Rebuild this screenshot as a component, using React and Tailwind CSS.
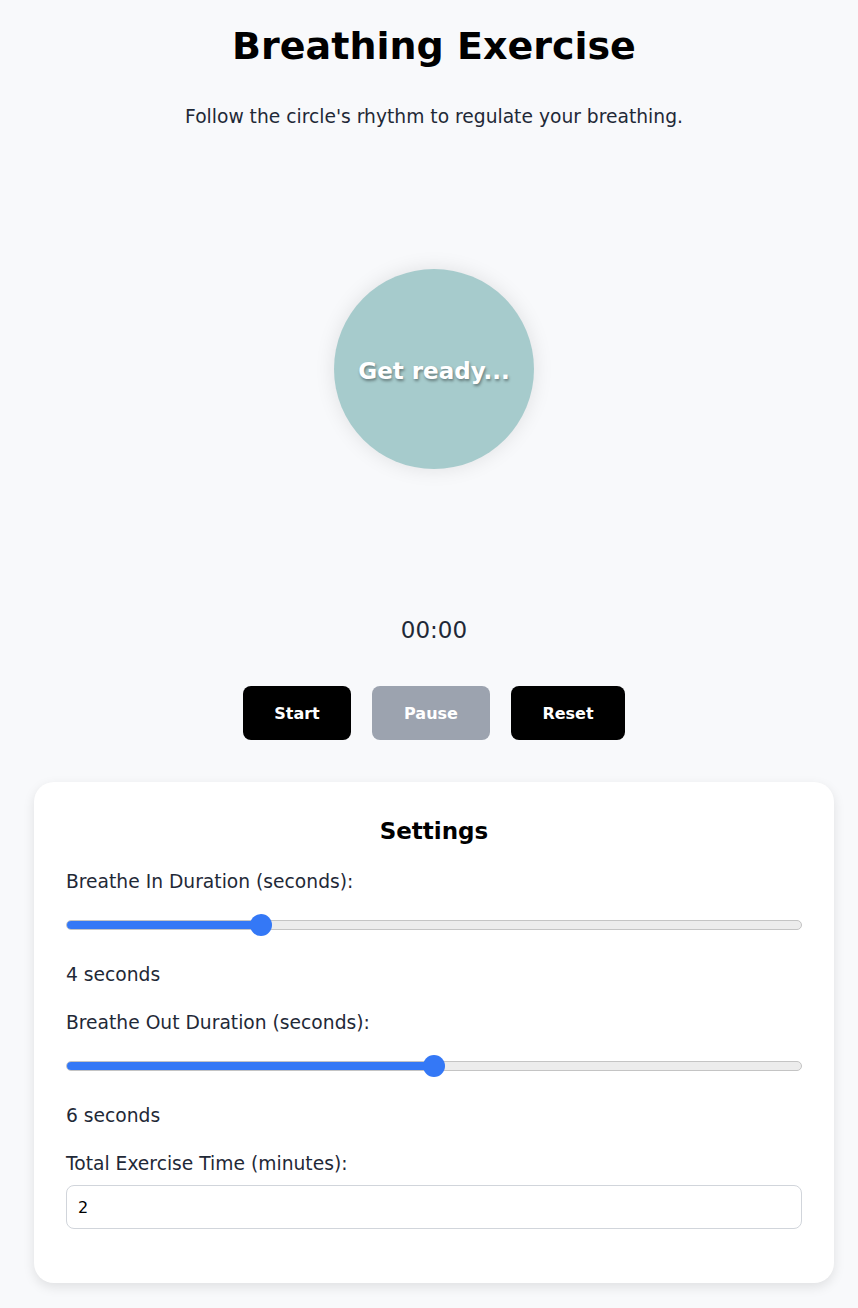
import React, { useState } from "react";

const Slider = ({ percent }) => (
  <div className="relative h-[22px] flex items-center">
    <div className="w-full h-[10px] rounded-full bg-[#ececec] border border-[#c4c4c4] overflow-hidden">
      <div className="h-full bg-[#3478f6]" style={{ width: `${percent}%` }} />
    </div>
    <div
      className="absolute top-0 w-[22px] h-[22px] -ml-[11px] rounded-full bg-[#3478f6]"
      style={{ left: `${percent}%` }}
    />
  </div>
);

export default function App() {
  const [minutes, setMinutes] = useState("2");

  return (
    <div className="min-h-screen bg-[#f8f9fb] pl-[10px] flex flex-col items-center font-['DejaVu_Sans',sans-serif] text-[#1f2937]">
      <h1 className="mt-[22px] text-[38px] leading-[48px] font-bold text-black">
        Breathing Exercise
      </h1>
      <p className="mt-[36px] text-[18.7px] leading-[22px]">
        Follow the circle's rhythm to regulate your breathing.
      </p>

      <div className="h-[400px] mt-[41px] flex items-center justify-center">
        <div className="w-[200px] h-[200px] pt-[4px] rounded-full bg-[#a6cbcc] shadow-[0_0_20px_rgba(0,0,0,0.1)] flex items-center justify-center">
          <span className="text-white text-[23px] font-bold [text-shadow:1px_2px_3px_rgba(0,0,0,0.4)]">
            Get ready...
          </span>
        </div>
      </div>

      <div className="mt-[46px] text-[23px] leading-[30px]">00:00</div>

      <div className="mt-[41px] flex gap-[21px]">
        <button className="h-[54px] w-[108px] pt-[2px] rounded-lg bg-black text-white font-bold text-[16px]">
          Start
        </button>
        <button className="h-[54px] w-[118px] pt-[2px] rounded-lg bg-[#9ca3af] text-white font-bold text-[16px]">
          Pause
        </button>
        <button className="h-[54px] w-[114px] pt-[2px] rounded-lg bg-black text-white font-bold text-[16px]">
          Reset
        </button>
      </div>

      <div className="mt-[42px] mb-[26px] w-[800px] bg-white rounded-[20px] shadow-[0_4px_12px_rgba(0,0,0,0.1)] px-8 pt-[34px] pb-[53px]">
        <h2 className="text-center text-[23px] leading-[30px] font-bold text-black">
          Settings
        </h2>
        <div className="mt-[25px] text-[18.7px] leading-[22px]">
          Breathe In Duration (seconds):
        </div>
        <div className="mt-[21px]">
          <Slider percent={26.5} />
        </div>
        <div className="mt-[28px] text-[18.7px] leading-[22px]">4 seconds</div>
        <div className="mt-[26px] text-[18.7px] leading-[22px]">
          Breathe Out Duration (seconds):
        </div>
        <div className="mt-[21px]">
          <Slider percent={50} />
        </div>
        <div className="mt-[28px] text-[18.7px] leading-[22px]">6 seconds</div>
        <div className="mt-[26px] text-[18.7px] leading-[22px]">
          Total Exercise Time (minutes):
        </div>
        <input
          type="number"
          value={minutes}
          onChange={(e) => setMinutes(e.target.value)}
          className="mt-[10px] mb-[1px] w-full h-[44px] px-[11px] rounded-lg border border-[#d1d5db] text-[16px] text-black outline-none"
        />
      </div>
    </div>
  );
}
